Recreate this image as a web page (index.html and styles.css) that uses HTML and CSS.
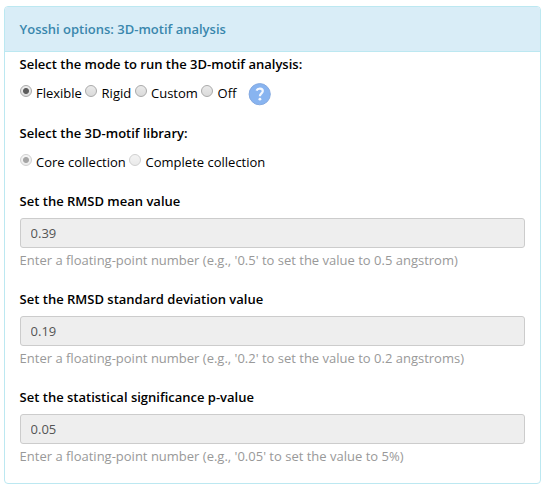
FILE: index.html
```
<!DOCTYPE html>
<html lang="en">
<head>
  <meta charset="UTF-8">
  <title>Yosshi options</title>
  <link rel="stylesheet" href="styles.css">
</head>
<body>
  <div class="panel">
    <div class="panel-heading">Yosshi options: 3D-motif analysis</div>
    <div class="panel-body">
      <div class="group">
        <div class="title">Select the mode to run the 3D-motif analysis:</div>
        <div class="radios">
          <label class="flexible"><input type="radio" name="mode" checked>Flexible</label>
          <label class="rigid"><input type="radio" name="mode">Rigid</label>
          <label class="custom"><input type="radio" name="mode">Custom</label>
          <label class="off"><input type="radio" name="mode">Off</label>
          <svg class="help-icon" width="24" height="24" viewBox="0 0 24 24">
            <circle cx="11.7" cy="12.2" r="10.6" fill="#88b4f0" stroke="#84a9e0" stroke-width="1"/>
            <path d="M8.5 8.6C9.6 5.9 14.8 5.9 14.8 9.1C14.8 11.5 11.9 11.4 11.9 14.3" fill="none" stroke="#f4f8ff" stroke-width="2.2"/>
            <circle cx="11.9" cy="17.2" r="1.4" fill="#f4f8ff"/>
          </svg>
        </div>
      </div>
      <div class="group">
        <div class="title">Select the 3D-motif library:</div>
        <div class="radios">
          <label class="core"><input type="radio" name="library" checked disabled>Core collection</label>
          <label class="complete"><input type="radio" name="library" disabled>Complete collection</label>
        </div>
      </div>
      <div class="group">
        <label class="title" for="mean">Set the RMSD mean value</label>
        <input class="field" type="text" id="mean" value="0.39" disabled>
        <div class="hint">Enter a floating-point number (e.g., '0.5' to set the value to 0.5 angstrom)</div>
      </div>
      <div class="group">
        <label class="title" for="deviation">Set the RMSD standard deviation value</label>
        <input class="field" type="text" id="deviation" value="0.19" disabled>
        <div class="hint">Enter a floating-point number (e.g., '0.2' to set the value to 0.2 angstroms)</div>
      </div>
      <div class="group">
        <label class="title" for="pvalue">Set the statistical significance p-value</label>
        <input class="field" type="text" id="pvalue" value="0.05" disabled>
        <div class="hint">Enter a floating-point number (e.g., '0.05' to set the value to 5%)</div>
      </div>
    </div>
  </div>
</body>
</html>
```
FILE: styles.css
```
* { box-sizing: border-box; }
body { margin: 0; padding: 6px 5px 0 4px; background: #fff; color: #000; font: 13px/24px "Open Sans", sans-serif; }
.panel { height: 478px; border: 1px solid #bce8f1; border-radius: 4px; overflow: hidden; }
.panel-heading { height: 45px; padding: 10px 14.5px; background: #d9edf7; border-bottom: 1px solid #bce8f1; color: #3a87ad; font-weight: 600; }
.panel-body { padding: 0 15px 0 14.6px; }
.group { margin-bottom: 15px; }
.group:first-child { margin-bottom: 16px; }
.title { display: block; font-weight: 600; }
.radios { display: flex; height: 24px; margin: 5px 0 0 0.4px; }
.radios label { display: flex; }
.radios input { appearance: none; flex: none; width: 12px; height: 12px; margin: 4px 4px 0 0; border: 1px solid #aaa; border-radius: 50%; background: linear-gradient(#eaeaea, #dadada); }
.radios input:checked { background: radial-gradient(circle, #5c5c5c 2.5px, transparent 3.5px), linear-gradient(#eee, #dcdcdc); }
.radios input:disabled { opacity: 0.55; }
.radios .rigid input, .radios .off input, .radios .complete input { margin-right: 4.6px; }
.flexible { width: 65px; }
.rigid { width: 50px; }
.custom { width: 66px; }
.off { width: 47px; }
.core { width: 109px; }
.help-icon { flex: none; margin-top: 1px; }
.field { display: block; width: 505px; height: 30px; margin: 5px 0 0 0.4px; padding: 0 10px 0 9.6px; border: 1px solid #ccc; border-radius: 3px; background: #eee; color: #555; font: inherit; }
.hint { color: #999; }
```
